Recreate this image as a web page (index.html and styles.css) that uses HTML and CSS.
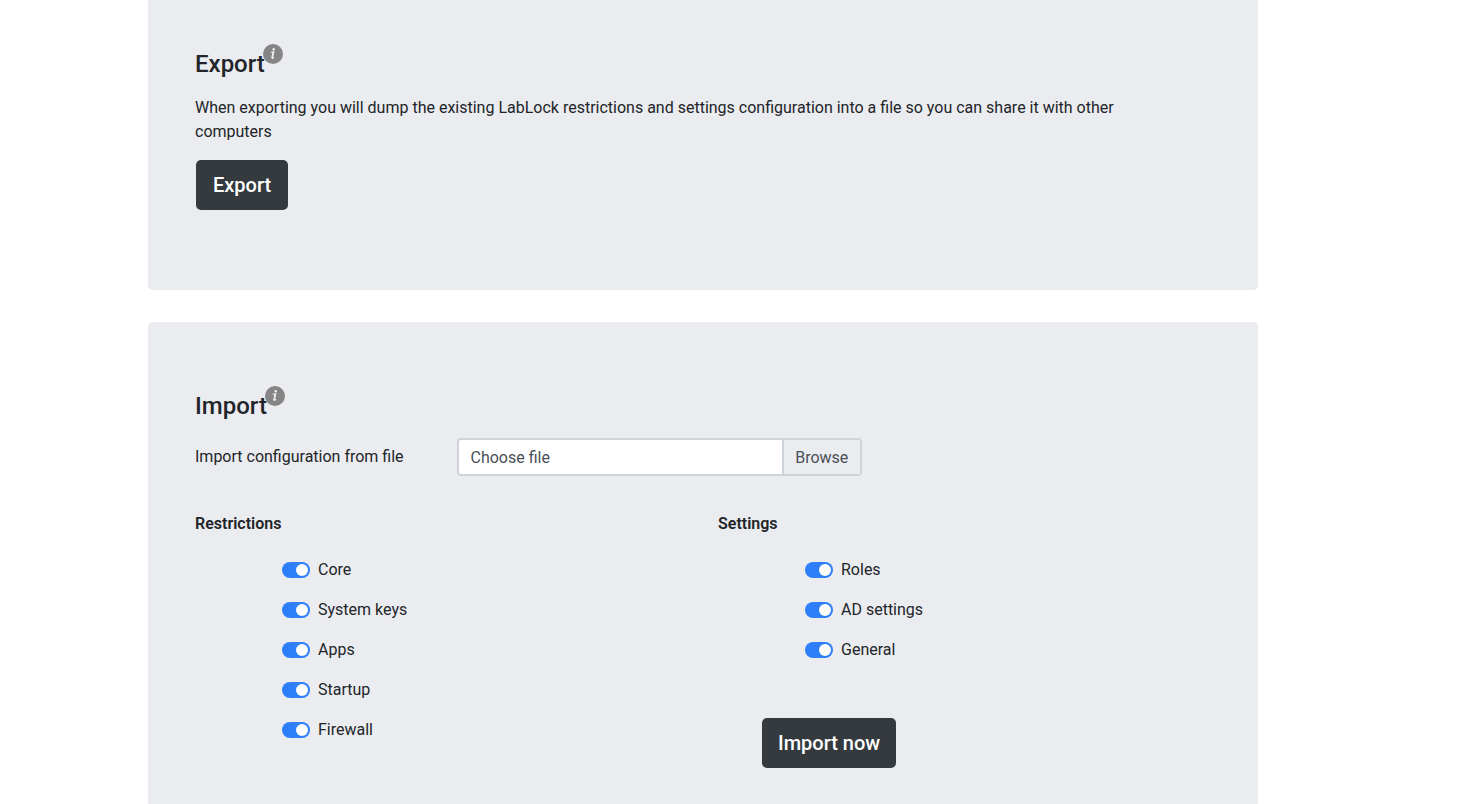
FILE: index.html
```html
<!DOCTYPE html>
<html lang="en">
<head>
<meta charset="utf-8">
<title>Export and import</title>
<link rel="stylesheet" href="styles.css">
</head>
<body>
<main class="page">
  <section class="panel panel-export">
    <h2 class="title">Export
      <svg class="info" viewBox="0 0 20 20" role="img" aria-label="Info"><circle cx="10" cy="10" r="10" fill="#858585"/><circle cx="10.7" cy="5.3" r="1.2" fill="#f1f1f1"/><path d="M7.7 8.3 10.8 7.8 9.4 13.2Q9.2 14.6 9.7 14.4L11.1 13.2" fill="none" stroke="#f1f1f1" stroke-width="1.1"/><path d="M10.3 8 8.9 14.4" stroke="#f1f1f1" stroke-width="1.5"/></svg>
    </h2>
    <p class="text">When exporting you will dump the existing LabLock restrictions and settings configuration into a file so you can share it with other computers</p>
    <button class="button" type="button">Export</button>
  </section>

  <section class="panel panel-import">
    <h2 class="title">Import
      <svg class="info" viewBox="0 0 20 20" role="img" aria-label="Info"><circle cx="10" cy="10" r="10" fill="#858585"/><circle cx="10.7" cy="5.3" r="1.2" fill="#f1f1f1"/><path d="M7.7 8.3 10.8 7.8 9.4 13.2Q9.2 14.6 9.7 14.4L11.1 13.2" fill="none" stroke="#f1f1f1" stroke-width="1.1"/><path d="M10.3 8 8.9 14.4" stroke="#f1f1f1" stroke-width="1.5"/></svg>
    </h2>
    <div class="row">
      <label class="row-label" for="config">Import configuration from file</label>
      <div class="file">
        <input class="file-input" type="file" id="config">
        <label class="file-face" for="config"><span class="file-name">Choose file</span><span class="file-browse">Browse</span></label>
      </div>
    </div>
    <div class="groups">
      <div class="group">
        <h3 class="subtitle">Restrictions</h3>
        <div class="switches">
          <label class="switch"><input class="toggle" type="checkbox" checked>Core</label>
          <label class="switch"><input class="toggle" type="checkbox" checked>System keys</label>
          <label class="switch"><input class="toggle" type="checkbox" checked>Apps</label>
          <label class="switch"><input class="toggle" type="checkbox" checked>Startup</label>
          <label class="switch"><input class="toggle" type="checkbox" checked>Firewall</label>
        </div>
      </div>
      <div class="group">
        <h3 class="subtitle">Settings</h3>
        <div class="switches">
          <label class="switch"><input class="toggle" type="checkbox" checked>Roles</label>
          <label class="switch"><input class="toggle" type="checkbox" checked>AD settings</label>
          <label class="switch"><input class="toggle" type="checkbox" checked>General</label>
        </div>
        <button class="button button-import" type="button">Import now</button>
      </div>
    </div>
  </section>
</main>
</body>
</html>
```

FILE: styles.css
```css
* { box-sizing: border-box; }

body {
  margin: 0;
  padding-right: 62px;
  background: #fff;
  color: #212529;
  font: 16px/24px Roboto, "Liberation Sans", sans-serif;
}

.page {
  display: flex;
  flex-direction: column;
  gap: 32px;
  max-width: 1110px;
  min-height: 100vh;
  margin: 0 auto;
}

.panel { background: #ebecf0; }

.panel-export {
  padding: 48px 47px 80px;
  border-radius: 0 0 5px 5px;
}

.panel-import {
  flex: 1;
  padding: 68px 47px 36px;
  border-radius: 5px 5px 0 0;
}

.title {
  display: flex;
  align-items: flex-start;
  margin: 0 0 16px;
  font-size: 24px;
  line-height: 32px;
  font-weight: 500;
}

.info {
  width: 20px;
  height: 20px;
  margin: -4px 0 0 -2px;
}

.text {
  margin: 0 0 16px;
  padding-right: 30px;
}

.button {
  display: block;
  height: 50px;
  margin: 0 1px;
  padding: 0 17px;
  border: 0;
  border-radius: 5px;
  background: #343a3e;
  color: #fff;
  font: 500 20px/30px Roboto, "Liberation Sans", sans-serif;
}

.row {
  display: grid;
  grid-template-columns: repeat(12, 1fr);
  column-gap: 30px;
  align-items: center;
}

.row-label { grid-column: span 3; }

.file {
  position: relative;
  grid-column: span 5;
}

.file-input {
  position: absolute;
  inset: 0;
  width: 100%;
  height: 100%;
  margin: 0;
  opacity: 0;
}

.file-face {
  display: flex;
  height: 38px;
  border: 2px solid #ced4da;
  border-radius: 4px;
  background: #fff;
  color: #495057;
  line-height: 36px;
}

.file-name {
  flex: 1;
  padding-left: 12px;
}

.file-browse {
  padding: 0 12px 0 11px;
  border-left: 2px solid #ced4da;
  background: #ebecf0;
}

.groups {
  display: grid;
  grid-template-columns: 1fr 1fr;
  column-gap: 30px;
  margin-top: 36px;
}

.subtitle {
  margin: 0 0 22px;
  font-size: 16px;
  line-height: 24px;
  font-weight: 600;
}

.switches {
  display: flex;
  flex-direction: column;
  align-items: flex-start;
  gap: 16px;
  padding-left: 87px;
}

.switch {
  display: flex;
  align-items: center;
  gap: 8px;
}

.toggle {
  appearance: none;
  display: flex;
  width: 28px;
  height: 16px;
  margin: 0;
  padding: 2px;
  border-radius: 8px;
  background: #adb5bd;
}

.toggle::before {
  content: "";
  width: 12px;
  height: 12px;
  border-radius: 6px;
  background: #fff;
}

.toggle:checked {
  justify-content: flex-end;
  background: #2d7ff9;
}

.button-import {
  margin: 56px 0 0 44px;
  padding: 0 16px;
}
```
